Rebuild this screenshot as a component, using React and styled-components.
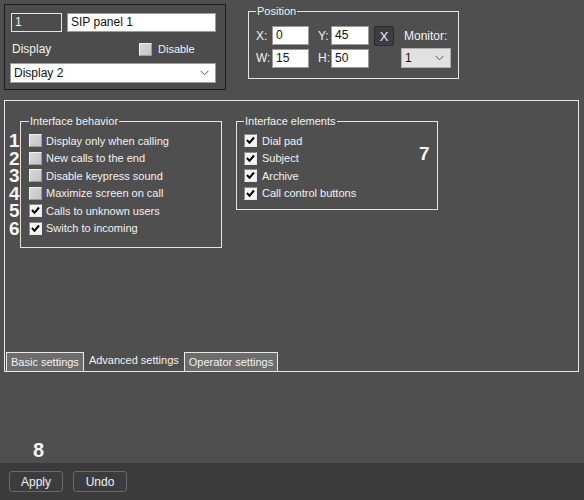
import React from 'react';
import styled, { createGlobalStyle } from 'styled-components';

const GlobalStyle = createGlobalStyle`
  html, body { margin: 0; padding: 0; background: #4f4f4f; }
  body { font-family: "Liberation Sans", Arial, sans-serif; font-size: 11px; color: #f2f2f2; }
  * { box-sizing: border-box; }
`;

const Page = styled.div`
  display: flex;
  flex-direction: column;
  width: 584px;
  height: 500px;
  background: #4f4f4f;
`;

const TopRow = styled.div`
  display: flex;
  align-items: flex-start;
  padding: 4px 0 0 4px;
  height: 90px;
`;

const NamePanel = styled.div`
  width: 222px;
  height: 86px;
  border: 1px solid #1c1c1c;
  background: #4c4c4c;
  padding: 8px 8px 0 5px;
  display: flex;
  flex-direction: column;
`;

const NameRow = styled.div`
  display: flex;
  gap: 5px;
  padding-left: 1px;
`;

const TextBox = styled.div`
  height: 19px;
  width: ${p => p.w}px;
  border: 1px solid ${p => (p.dark ? '#e6e6e6' : '#9a9a9a')};
  background: ${p => (p.dark ? '#4c4c4c' : '#ffffff')};
  color: ${p => (p.dark ? '#f2f2f2' : '#111')};
  font-size: 12px;
  line-height: 17px;
  padding-left: 3px;
  white-space: nowrap;
`;

const DisplayRow = styled.div`
  display: flex;
  align-items: center;
  height: 16px;
  margin-top: 9px;
  padding-left: 2px;
`;

const DisplayLabel = styled.span`
  width: 127px;
  font-size: 12px;
`;

const CheckLine = styled.label`
  display: flex;
  align-items: center;
  gap: ${p => p.gap || 4}px;
  height: ${p => p.h || 17.5}px;
  position: relative;
  white-space: nowrap;
`;

const Box = styled.span`
  width: 13px;
  height: 13px;
  flex: none;
  border: 1px solid;
  border-color: ${p => (p.checked ? '#8c8c8c #e8e8e8 #e8e8e8 #8c8c8c' : '#f0f0f0 #9a9a9a #9a9a9a #f0f0f0')};
  background: ${p => (p.checked ? '#f4f4f4' : 'linear-gradient(135deg, #d9d9d9, #c4c4c4)')};
  display: flex;
  align-items: center;
  justify-content: center;
`;

const Select = styled.div`
  margin-top: 6px;
  height: 20px;
  width: ${p => p.w}px;
  background: ${p => p.bg || '#ffffff'};
  border: 1px solid ${p => p.border || '#9a9a9a'};
  color: #111;
  font-size: 12px;
  display: flex;
  align-items: center;
  justify-content: space-between;
  padding: 0 6px 0 3px;
`;

const Chevron = () => (
  <svg width="9" height="6" viewBox="0 0 9 6">
    <polyline points="0.5,0.8 4.5,4.8 8.5,0.8" fill="none" stroke="#555" strokeWidth="1" />
  </svg>
);

const Tick = () => (
  <svg width="9" height="9" viewBox="0 0 9 9">
    <path d="M1 4 L3.5 6.8 L8 1.5" fill="none" stroke="#000" strokeWidth="2" />
  </svg>
);

const Check = ({ checked, children, gap, h }) => (
  <CheckLine gap={gap} h={h}>
    <Box checked={checked}>{checked && <Tick />}</Box>
    {children}
  </CheckLine>
);

const Group = styled.fieldset`
  margin: 0;
  border: 1px solid #e4e4e4;
  padding: ${p => p.pad};
  width: ${p => p.w}px;
  min-width: 0;
  position: relative;
`;

const Legend = styled.legend`
  padding: 0 1px;
  line-height: 14px;
  font-size: 11px;
  color: #f2f2f2;
`;

const PositionGroup = styled(Group)`
  margin-left: 22px;
  display: grid;
  grid-template-columns: 16px 37px 22px 38px 32px 50px;
  grid-template-rows: 19px 20px;
  row-gap: 3px;
  align-items: center;
`;

const PosLabel = styled.span`
  font-size: 12px;
  padding-left: ${p => p.pl || 0}px;
`;

const XButton = styled.div`
  width: 20px;
  height: 20px;
  margin-left: 5px;
  background: #3c3c42;
  border: 1px solid #2a2a2e;
  border-radius: 2px;
  color: #eee;
  font-size: 13px;
  display: flex;
  align-items: center;
  justify-content: center;
  align-self: start;
`;

const MonitorLabel = styled.span`
  font-size: 12px;
  padding-left: 3px;
`;

const MonitorSelect = styled(Select)`
  margin-top: 0;
`;

const TabPanel = styled.div`
  margin: 10px 0 0 4px;
  width: 575px;
  height: 272px;
  border: 1px solid #e8e8e8;
  border-bottom: none;
  display: flex;
  flex-direction: column;
`;

const TabContent = styled.div`
  flex: 1;
  display: flex;
  align-items: flex-start;
  gap: 14px;
  padding: 13px 0 0 15px;
`;

const Marker = styled.span`
  position: absolute;
  left: ${p => p.left}px;
  top: ${p => p.top}px;
  font-size: 19px;
  font-weight: bold;
  color: #f4f4f4;
  line-height: 17px;
`;

const TabStrip = styled.div`
  display: flex;
  align-items: flex-end;
  height: 20px;
  padding-left: 1px;
  border-bottom: 1px solid #e8e8e8;
`;

const Tab = styled.div`
  height: 19px;
  padding: ${p => (p.active ? '0 5px 3px' : '0 4px')};
  display: flex;
  align-items: center;
  font-size: 11px;
  white-space: nowrap;
  background: ${p => (p.active ? 'transparent' : '#6c6c6c')};
  border: ${p => (p.active ? 'none' : '1px solid #e8e8e8')};
  border-bottom: none;
`;

const Spacer = styled.div`
  flex: 1;
  display: flex;
  align-items: flex-end;
  padding: 0 0 3px 33px;
`;

const BigNum = styled.span`
  font-size: 20px;
  font-weight: bold;
  color: #f4f4f4;
  line-height: 20px;
`;

const BottomBar = styled.div`
  height: 37px;
  background: #3b3b3b;
  display: flex;
  gap: 10px;
  padding: 8px 0 0 9px;
`;

const Button = styled.div`
  width: 54px;
  height: 21px;
  background: #3c3c40;
  border: 1px solid #6a6a6a;
  border-radius: 3px;
  color: #f0f0f0;
  font-size: 12px;
  display: flex;
  align-items: center;
  justify-content: center;
`;

const behavior = [
  ['Display only when calling', false],
  ['New calls to the end', false],
  ['Disable keypress sound', false],
  ['Maximize screen on call', false],
  ['Calls to unknown users', true],
  ['Switch to incoming', true],
];

const elements = ['Dial pad', 'Subject', 'Archive', 'Call control buttons'];

export default function App() {
  return (
    <Page>
      <GlobalStyle />
      <TopRow>
        <NamePanel>
          <NameRow>
            <TextBox w={51} dark>1</TextBox>
            <TextBox w={149}>SIP panel 1</TextBox>
          </NameRow>
          <DisplayRow>
            <DisplayLabel>Display</DisplayLabel>
            <Check gap={6} h={16}>Disable</Check>
          </DisplayRow>
          <Select w={206}>
            Display 2
            <Chevron />
          </Select>
        </NamePanel>

        <PositionGroup w={211} pad="8px 0 10px 7px">
          <Legend>Position</Legend>
          <PosLabel>X:</PosLabel>
          <TextBox w={37}>0</TextBox>
          <PosLabel pl={9}>Y:</PosLabel>
          <TextBox w={38}>45</TextBox>
          <XButton>X</XButton>
          <MonitorLabel>Monitor:</MonitorLabel>
          <PosLabel>W:</PosLabel>
          <TextBox w={37}>15</TextBox>
          <PosLabel pl={9}>H:</PosLabel>
          <TextBox w={38}>50</TextBox>
          <span />
          <MonitorSelect w={50} bg="#e1e1e1" border="#b0b0b0">
            1
            <Chevron />
          </MonitorSelect>
        </PositionGroup>
      </TopRow>

      <TabPanel>
        <TabContent>
          <Group w={202} pad="4px 0 10px 8px">
            <Legend>Interface behavior</Legend>
            {behavior.map(([label, on], i) => (
              <Check key={label} checked={on}>
                <Marker left={-20} top={0}>{i + 1}</Marker>
                {label}
              </Check>
            ))}
          </Group>
          <Group w={202} pad="4px 0 7px 7px">
            <Legend>Interface elements</Legend>
            <Marker left={182} top={17}>7</Marker>
            {elements.map(label => (
              <Check key={label} checked gap={5}>{label}</Check>
            ))}
          </Group>
        </TabContent>
        <TabStrip>
          <Tab>Basic settings</Tab>
          <Tab active>Advanced settings</Tab>
          <Tab>Operator settings</Tab>
        </TabStrip>
      </TabPanel>

      <Spacer>
        <BigNum>8</BigNum>
      </Spacer>
      <BottomBar>
        <Button>Apply</Button>
        <Button>Undo</Button>
      </BottomBar>
    </Page>
  );
}
